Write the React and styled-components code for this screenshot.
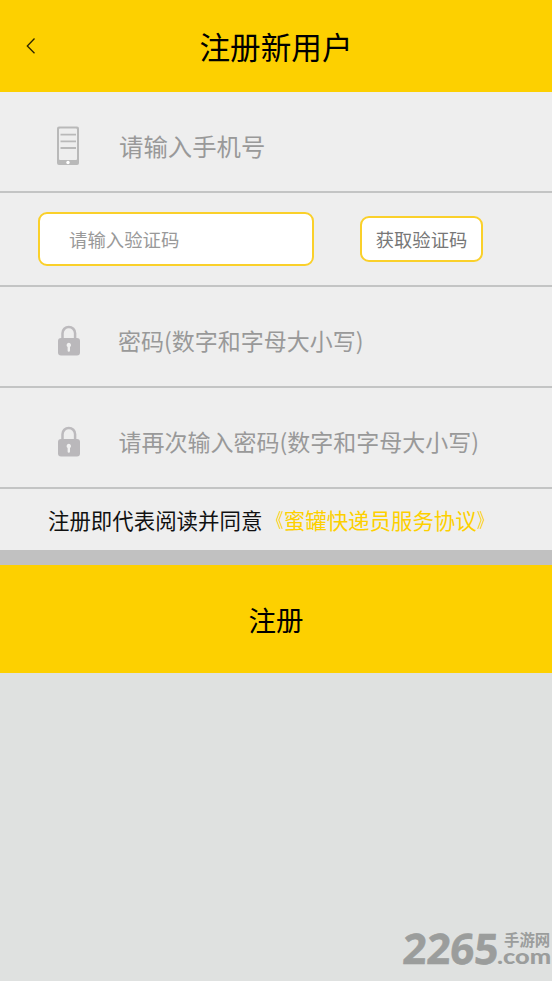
import React from "react";
import styled, { createGlobalStyle } from "styled-components";

const GlobalStyle = createGlobalStyle`
  * {
    box-sizing: border-box;
  }

  body {
    margin: 0;
    background-color: #dfe1e0;
    font-family: "Noto Sans CJK SC", sans-serif;
  }

  button,
  input {
    font-family: inherit;
    border: none;
    padding: 0;
    margin: 0;
    outline: none;
  }
`;

const Page = styled.div`
  position: relative;
  width: 100%;
  height: 981px;
  overflow: hidden;
  background-color: #dfe1e0;
`;

const Header = styled.header`
  display: grid;
  grid-template-columns: 60px 1fr 60px;
  align-items: center;
  height: 92px;
  background-color: #fdd000;
`;

const BackButton = styled.button`
  display: flex;
  padding-left: 25px;
  background: none;
`;

const Title = styled.h1`
  margin: 0;
  font-size: 30.6px;
  font-weight: 400;
  line-height: 44px;
  text-align: center;
  color: #000;
`;

const Row = styled.div`
  display: flex;
  align-items: center;
  height: ${(props) => props.$height}px;
  padding-top: ${(props) => props.$top || 0}px;
  padding-left: ${(props) => props.$left}px;
  background-color: #eee;
  border-bottom: 2px solid #c3c4c4;
`;

const IconBox = styled.div`
  display: flex;
  width: ${(props) => props.$width}px;
  flex-shrink: 0;
`;

const TextInput = styled.input`
  flex: 1;
  min-width: 0;
  height: 50px;
  background: none;
  font-size: ${(props) => props.$size}px;

  &::placeholder {
    color: #999;
    opacity: 1;
  }
`;

const PasswordInput = styled(TextInput)`
  padding-bottom: 2px;
`;

const CodeInput = styled(TextInput)`
  flex: none;
  width: 276px;
  height: 54px;
  padding-left: 29px;
  background-color: #fff;
  border: 2px solid #fad02a;
  border-radius: 9px;
`;

const CodeButton = styled.button`
  width: 123px;
  height: 46px;
  margin-left: 46px;
  background-color: #fff;
  border: 2px solid #fad02a;
  border-radius: 9px;
  font-size: 18.3px;
  color: #777;
`;

const Agreement = styled.p`
  display: flex;
  margin: 0;
  height: 61px;
  padding-left: 48px;
  line-height: 62px;
  font-size: 21.45px;
  color: #111;
  background-color: #eee;
  white-space: nowrap;
`;

const AgreementLink = styled.span`
  display: flex;
  color: #fdd000;
`;

const Bracket = styled.span`
  width: 21.4px;
  transform: scale(0.72, 0.9);
  transform-origin: ${(props) => (props.$open ? "right" : "left")};
`;

const SubmitButton = styled.button`
  display: block;
  width: 100%;
  height: 123px;
  border-top: 15px solid #c1c1c1;
  background-color: #fdd000;
  font-size: 27.5px;
  color: #000;
`;

const Watermark = styled.div`
  position: absolute;
  right: 0;
  bottom: 16px;
  display: flex;
  align-items: flex-end;
  width: 149px;
  height: 38px;
  color: #9b9d9c;
`;

const WatermarkDigits = styled.span`
  width: 94px;
  height: 38px;
  font-family: "Open Sans", sans-serif;
  font-size: 42px;
  font-weight: 700;
  line-height: 42px;
  letter-spacing: -0.1px;
  transform: skewX(-4deg);
  -webkit-text-stroke: 0.6px #9b9d9c;
`;

const WatermarkSide = styled.div`
  display: flex;
  flex-direction: column;
  width: 55px;
  height: 35px;
`;

const WatermarkName = styled.span`
  padding-left: 7px;
  font-size: 15.4px;
  font-weight: 700;
  line-height: 19px;
`;

const WatermarkDomain = styled.span`
  width: 43px;
  font-family: Lato, sans-serif;
  font-size: 20px;
  font-weight: 900;
  line-height: 15px;
  transform: scaleX(1.27);
  transform-origin: left;
`;

const BackIcon = () => (
  <svg width="12" height="18" viewBox="0 0 12 18" fill="none">
    <path d="M9.5 1.5 2.3 9l7.2 7.2" stroke="#2b2400" strokeWidth="1.3" />
  </svg>
);

const PhoneIcon = () => (
  <svg width="24" height="40" viewBox="0 0 24 40">
    <path
      fillRule="evenodd"
      fill="#b9b9b9"
      d="M3 .5h18a2 2 0 0 1 2 2V37a2 2 0 0 1-2 2H3a2 2 0 0 1-2-2V2.500a2 2 0 0 1 2-2ZM4 2.500a1 1 0 0 0-1 1V33a1 1 0 0 0 1 1h16a1 1 0 0 0 1-1V3.500a1 1 0 0 0-1-1Z"
    />
    <path d="M4.500 8.700h15.500M4.500 15.400h15.500M4.500 22h15.500" stroke="#b9b9b9" strokeWidth="1.800" />
    <circle cx="12" cy="36.500" r="1.700" fill="#fff" />
  </svg>
);

const LockIcon = () => (
  <svg width="24" height="32" viewBox="0 0 24 32">
    <path
      d="M5.500 14V8.200a6.300 6.300 0 0 1 12.600 0V14"
      fill="none"
      stroke="#bcbabd"
      strokeWidth="2.500"
    />
    <rect x="1" y="13" width="22" height="17.500" rx="3" fill="#bab8bb" />
    <path
      d="M11.800 17.800a2.300 2.300 0 0 1 1.200 4.200v3.500a1.200 1.200 0 0 1-2.400 0V22a2.300 2.300 0 0 1 1.200-4.200Z"
      fill="#f1f1f1"
    />
  </svg>
);

const App = () => {
  return (
    <>
      <GlobalStyle />
      <Page>
        <Header>
          <BackButton type="button">
            <BackIcon />
          </BackButton>
          <Title>注册新用户</Title>
        </Header>
        <Row $height={101} $top={8} $left={56}>
          <IconBox $width={63}>
            <PhoneIcon />
          </IconBox>
          <TextInput $size={24.4} placeholder="请输入手机号" />
        </Row>
        <Row $height={94} $left={38}>
          <CodeInput $size={18.4} placeholder="请输入验证码" />
          <CodeButton type="button">获取验证码</CodeButton>
        </Row>
        <Row $height={101} $top={8} $left={57}>
          <IconBox $width={61}>
            <LockIcon />
          </IconBox>
          <PasswordInput $size={23} placeholder="密码(数字和字母大小写)" />
        </Row>
        <Row $height={101} $top={8} $left={57}>
          <IconBox $width={61.5}>
            <LockIcon />
          </IconBox>
          <PasswordInput $size={23} placeholder="请再次输入密码(数字和字母大小写)" />
        </Row>
        <Agreement>
          注册即代表阅读并同意
          <AgreementLink>
            <Bracket $open>《</Bracket>
            蜜罐快递员服务协议
            <Bracket>》</Bracket>
          </AgreementLink>
        </Agreement>
        <SubmitButton type="button">注册</SubmitButton>
        <Watermark>
          <WatermarkDigits>2265</WatermarkDigits>
          <WatermarkSide>
            <WatermarkName>手游网</WatermarkName>
            <WatermarkDomain>.com</WatermarkDomain>
          </WatermarkSide>
        </Watermark>
      </Page>
    </>
  );
};

export default App;
